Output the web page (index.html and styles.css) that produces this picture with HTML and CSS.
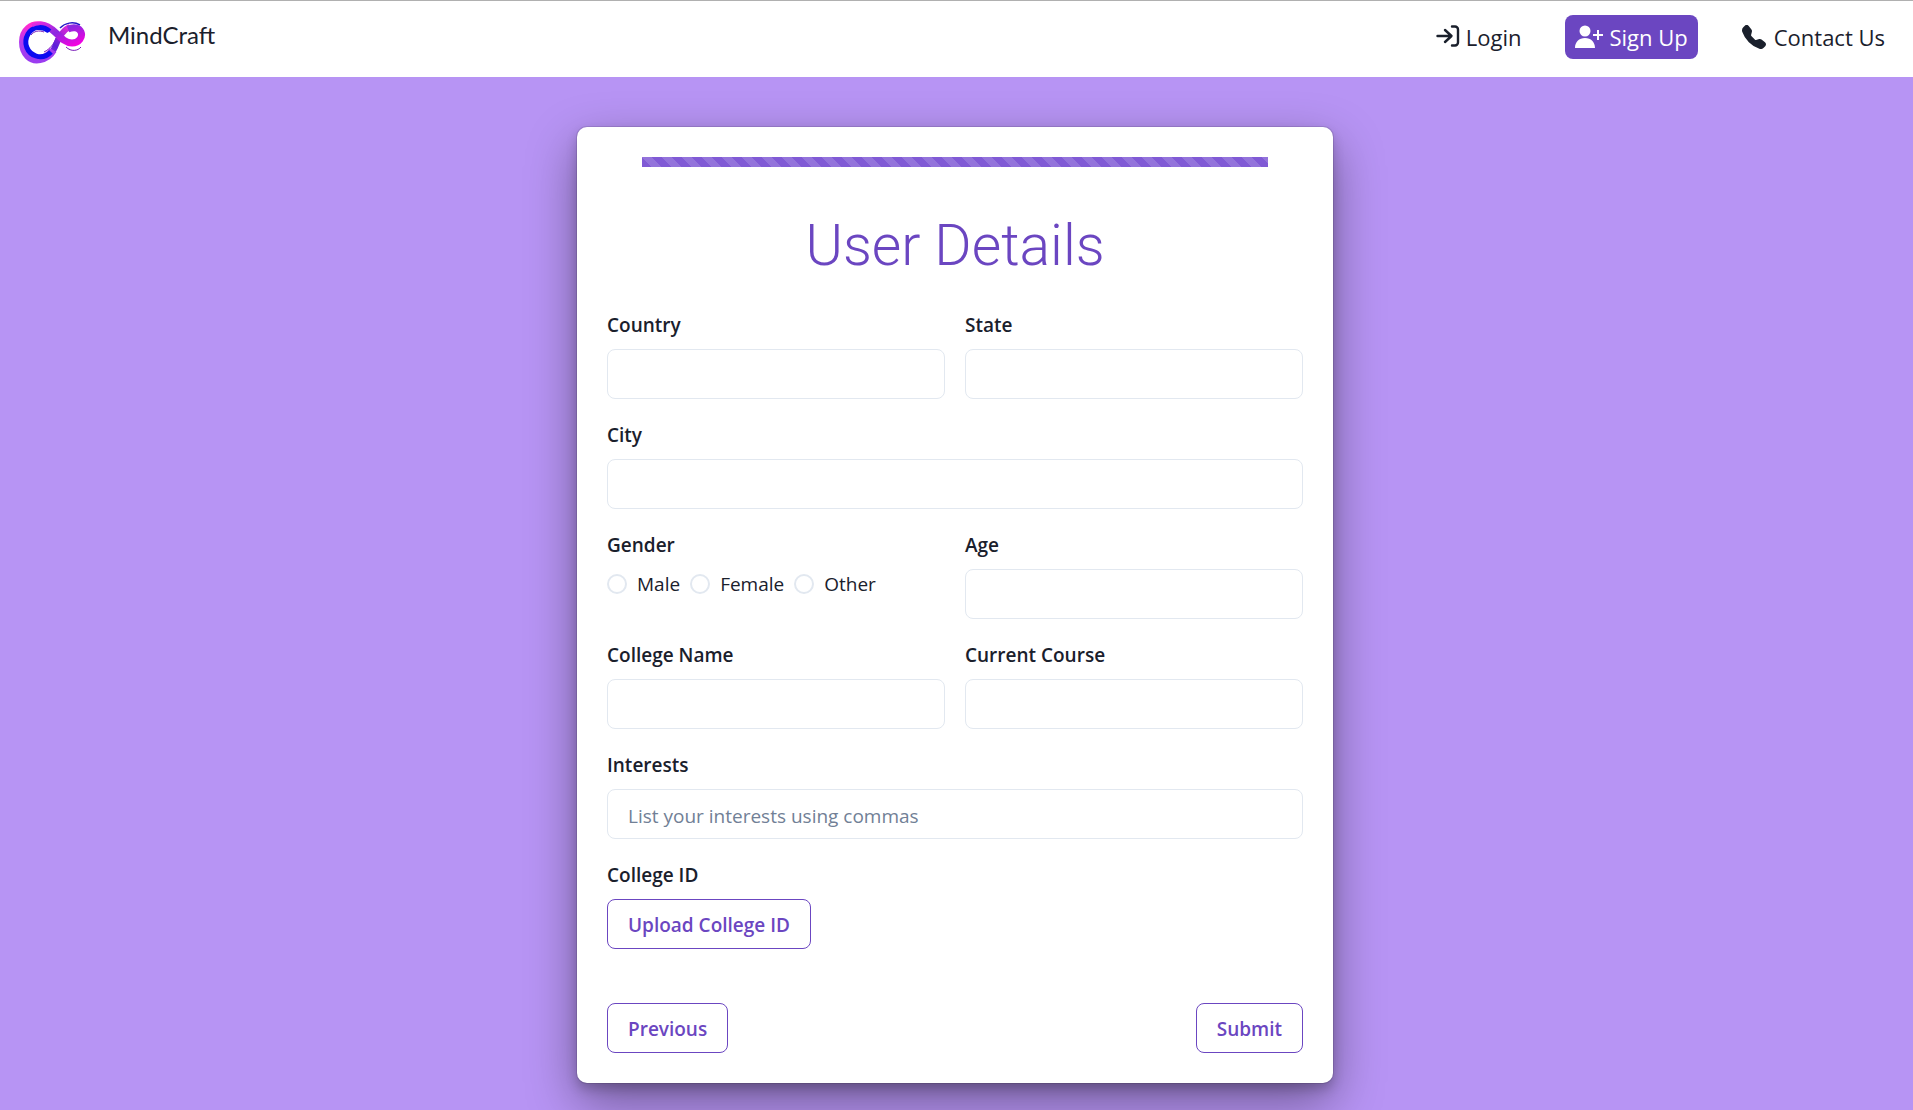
FILE: index.html
```html
<!DOCTYPE html>
<html lang="en">
<head>
<meta charset="utf-8">
<title>MindCraft</title>
<link rel="stylesheet" href="styles.css">
</head>
<body>
<header class="navbar">
  <a class="brand" href="#">
    <svg class="brand-logo" viewBox="0 0 67 43" aria-hidden="true">
      <defs>
        <linearGradient id="ring" x1="0" y1="0" x2="0" y2="1"><stop offset="0" stop-color="#ff2bd0"/><stop offset=".5" stop-color="#b13cf0"/><stop offset="1" stop-color="#9b3cf0"/></linearGradient>
        <linearGradient id="band" x1="0" y1="0" x2="1" y2="1"><stop offset="0" stop-color="#e02be0"/><stop offset=".45" stop-color="#8b28e0"/><stop offset="1" stop-color="#f400e0"/></linearGradient>
        <linearGradient id="tail" x1="0" y1="1" x2="1" y2="0"><stop offset="0" stop-color="#c52cf0"/><stop offset=".5" stop-color="#5a20d8"/><stop offset="1" stop-color="#e828d8"/></linearGradient>
      </defs>
      <path fill="none" stroke="#2418c8" stroke-width="1.500" d="M41 7C46 2 54 0 61 4"/>
      <path fill="none" stroke="#7a1cb8" stroke-width="1" d="M47 26c5 5 12 4 15 0M25 31c6-3 10-8 12-14M12 14c3-4 8-5 13-3"/>
      <path fill="none" stroke="url(#tail)" stroke-width="6" d="M14 36C24 40 32 35 36 26C39 18 43 9 51 6"/>
      <path fill="none" stroke="url(#ring)" stroke-width="8" d="M24 5C12 2 4 10 4 21C4 33 12 40 21 38C27 37 31 34 34 29"/>
      <path fill="none" stroke="#0b0bf0" stroke-width="5" d="M30 10C22 4 13 6 9 13C4 22 8 32 17 35C23 37 28 35 32 31"/>
      <path fill="none" stroke="url(#band)" stroke-width="7" d="M14 6C23 1 31 6 37 12C43 18 47 22 53 22C60 22 64 16 62 11C60 6 54 6 49 8"/>
      <path fill="none" stroke="#0b0bf0" stroke-width="4" d="M10 12C16 4 25 5 31 10"/>
    </svg>
    <span class="brand-name">MindCraft</span>
  </a>
  <nav class="nav-links">
    <a class="nav-link" href="#">
      <svg class="icon" viewBox="0 0 24 24" fill="none" stroke="currentColor" stroke-width="2.4" stroke-linecap="round" stroke-linejoin="round" aria-hidden="true"><path d="M1.500 11H15M9 5l6.500 6L9 17M16 1.500h3a3 3 0 0 1 3 3v13a3 3 0 0 1-3 3h-3"/></svg>
      Login
    </a>
    <a class="nav-link nav-link-primary" href="#">
      <svg class="icon icon-wide" viewBox="0 0 28 24" fill="currentColor" aria-hidden="true"><circle cx="10" cy="6" r="5.500"/><path d="M0 23c0-6 4-10 10-10s10 4 10 10zM22 5h2v4h4v2h-4v4h-2v-4h-4V9h4z"/></svg>
      Sign Up
    </a>
    <a class="nav-link nav-link-contact" href="#">
      <svg class="icon" viewBox="0 0 16 16" fill="currentColor" aria-hidden="true"><path d="M1.885.511a1.745 1.745 0 0 1 2.610.163L6.290 2.980c.329.423.445.974.315 1.494l-.547 2.190a.68.68 0 0 0 .178.643l2.457 2.457a.68.68 0 0 0 .644.178l2.189-.547a1.750 1.750 0 0 1 1.494.315l2.306 1.794c.829.645.905 1.870.163 2.611l-1.034 1.034c-.74.74-1.846 1.065-2.877.702a18.600 18.600 0 0 1-7.010-4.420 18.600 18.600 0 0 1-4.420-7.009c-.362-1.030-.037-2.137.703-2.877z"/></svg>
      Contact Us
    </a>
  </nav>
</header>
<main class="page">
  <form class="card">
    <div class="progress" role="progressbar" aria-label="Sign up progress" aria-valuenow="100"></div>
    <h1 class="title">User Details</h1>
    <div class="fields">
      <div class="field"><label class="label" for="country">Country</label><input class="input" id="country" type="text"></div>
      <div class="field"><label class="label" for="state">State</label><input class="input" id="state" type="text"></div>
      <div class="field field-full"><label class="label" for="city">City</label><input class="input" id="city" type="text"></div>
      <div class="field" role="radiogroup" aria-labelledby="gender">
        <span class="label" id="gender">Gender</span>
        <div class="radios">
          <label class="radio"><input class="radio-dot" type="radio" name="gender" value="male">Male</label>
          <label class="radio"><input class="radio-dot" type="radio" name="gender" value="female">Female</label>
          <label class="radio"><input class="radio-dot" type="radio" name="gender" value="other">Other</label>
        </div>
      </div>
      <div class="field"><label class="label" for="age">Age</label><input class="input" id="age" type="text"></div>
      <div class="field"><label class="label" for="college">College Name</label><input class="input" id="college" type="text"></div>
      <div class="field"><label class="label" for="course">Current Course</label><input class="input" id="course" type="text"></div>
      <div class="field field-full"><label class="label" for="interests">Interests</label><input class="input" id="interests" type="text" placeholder="List your interests using commas"></div>
      <div class="field field-full"><label class="label" for="upload">College ID</label><button class="button" id="upload" type="button">Upload College ID</button></div>
    </div>
    <div class="actions">
      <button class="button" type="button">Previous</button>
      <button class="button" type="submit">Submit</button>
    </div>
  </form>
</main>
</body>
</html>
```
FILE: styles.css
```css
*,
*::before,
*::after {
  box-sizing: border-box;
}

body {
  margin: 0;
  min-height: 100vh;
  background: #b794f4;
  color: #1a202c;
  font-family: "Open Sans", "Noto Sans", sans-serif;
  font-size: 19px;
  line-height: 30px;
}

.navbar {
  display: flex;
  justify-content: space-between;
  align-items: flex-start;
  height: 77px;
  padding: 14px 28px 0 19px;
  border-top: 1px solid #b0b0b0;
  background: #fff;
}

.brand {
  display: flex;
  align-items: flex-start;
  gap: 22px;
  padding-top: 6px;
  color: inherit;
  text-decoration: none;
}

.brand-logo {
  width: 67px;
  height: 43px;
}

.brand-name {
  font-family: Lato, sans-serif;
  font-size: 24px;
  line-height: 28px;
}

.nav-links {
  display: flex;
  gap: 44px;
}

.nav-link {
  display: flex;
  align-items: center;
  gap: 6px;
  height: 44px;
  color: inherit;
  font-size: 22px;
  text-decoration: none;
}

.nav-link-primary {
  padding: 0 10px;
  border-radius: 8px;
  background: #6b46c1;
  color: #fff;
}

.nav-link-contact {
  gap: 8px;
}

.icon {
  width: 24px;
  height: 24px;
}

.icon-wide {
  width: 28px;
}

.page {
  padding: 50px 19px 27px 16px;
}

.card {
  width: 100%;
  max-width: 756px;
  margin: 0 auto;
  padding: 30px;
  border-radius: 10px;
  background: #fff;
  box-shadow: 0 0 0 1px rgba(0, 0, 0, 0.1), 0 6px 12px rgba(0, 0, 0, 0.2),
    0 19px 50px rgba(0, 0, 0, 0.4);
}

.progress {
  width: 90%;
  height: 10px;
  margin: 0 auto;
  background-color: #805ad5;
  background-image: linear-gradient(
    45deg,
    rgba(255, 255, 255, 0.15) 25%,
    transparent 25%,
    transparent 50%,
    rgba(255, 255, 255, 0.15) 50%,
    rgba(255, 255, 255, 0.15) 75%,
    transparent 75%
  );
  background-size: 20px 20px;
}

.title {
  margin: 42px 0 26px;
  color: #6b46c1;
  font-family: Roboto, sans-serif;
  font-size: 57px;
  font-weight: 300;
  line-height: 74px;
  text-align: center;
}

.fields {
  display: grid;
  grid-template-columns: 1fr 1fr;
  gap: 20px;
}

.field {
  display: flex;
  flex-direction: column;
  align-items: flex-start;
  gap: 8px;
}

.field-full {
  grid-column: 1 / -1;
}

.label {
  font-weight: 600;
  line-height: 32px;
}

.input {
  width: 100%;
  height: 50px;
  padding: 4px 20px 0;
  border: 1px solid #e2e8f0;
  border-radius: 8px;
  background: #fff;
  color: inherit;
  font: inherit;
}

.input::placeholder {
  color: #718096;
  opacity: 1;
}

.radios {
  display: flex;
  gap: 10px;
}

.radio {
  display: flex;
  align-items: center;
  gap: 10px;
}

.radio-dot {
  appearance: none;
  width: 20px;
  height: 20px;
  margin: 0;
  border: 2px solid #e2e8f0;
  border-radius: 50%;
}

.radio-dot:checked {
  border: 6px solid #805ad5;
}

.button {
  height: 50px;
  padding: 2px 20px 0;
  border: 1px solid #6b46c1;
  border-radius: 8px;
  background: #fff;
  color: #6b46c1;
  font: inherit;
  font-weight: 600;
}

.actions {
  display: flex;
  justify-content: space-between;
  margin-top: 54px;
}
```
